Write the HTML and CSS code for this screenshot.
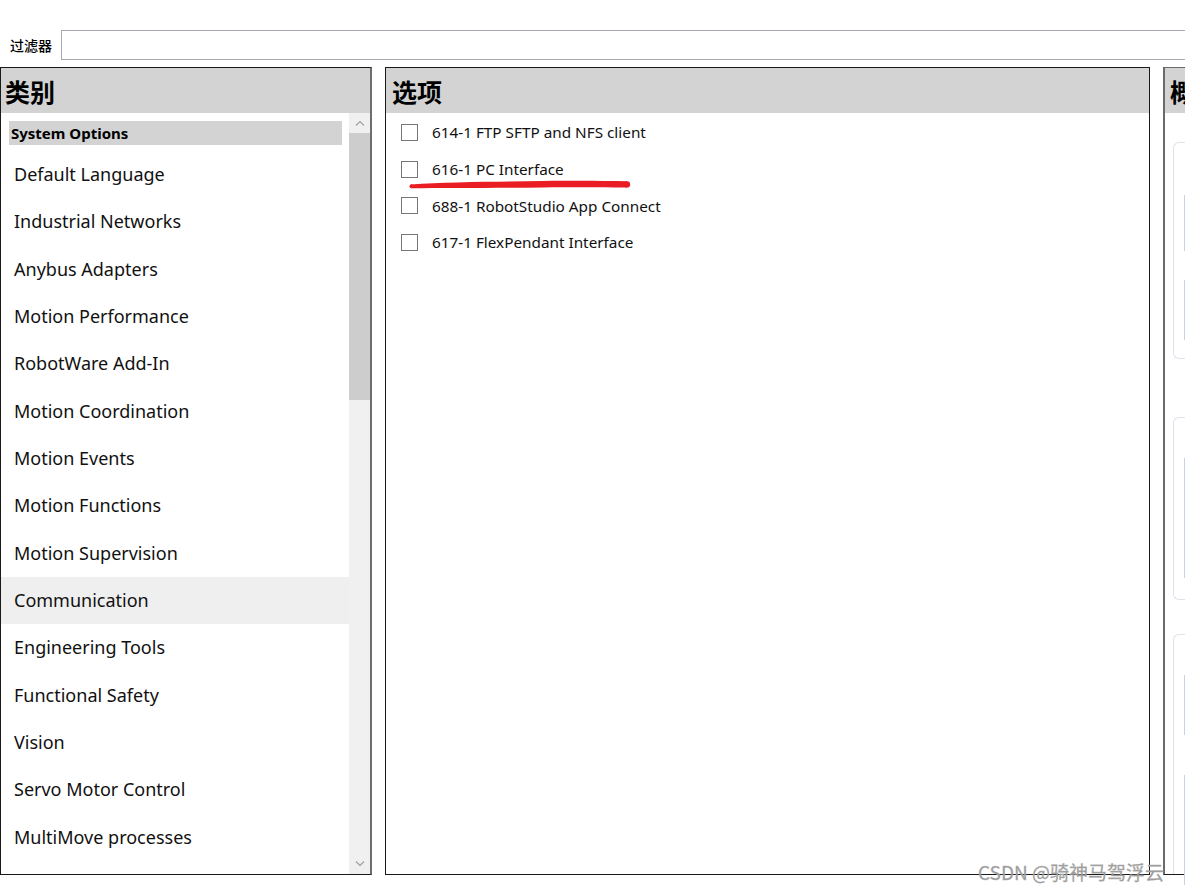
FILE: index.html
```html
<!DOCTYPE html>
<html lang="zh">
<head>
    <meta charset="UTF-8">
    <title>Options</title>
    <link rel="stylesheet" href="styles.css">
</head>
<body>

<div class="filter-row">
    <label for="filter">过滤器</label>
    <input type="text" id="filter" class="filter-input">
</div>

<div class="panels">
    <section class="panel panel-category">
        <h2 class="panel-head">类别</h2>
        <div class="panel-body">
            <ul class="category-list">
                <li class="group">System Options</li>
                <li>Default Language</li>
                <li>Industrial Networks</li>
                <li>Anybus Adapters</li>
                <li>Motion Performance</li>
                <li>RobotWare Add-In</li>
                <li>Motion Coordination</li>
                <li>Motion Events</li>
                <li>Motion Functions</li>
                <li>Motion Supervision</li>
                <li class="selected">Communication</li>
                <li>Engineering Tools</li>
                <li>Functional Safety</li>
                <li>Vision</li>
                <li>Servo Motor Control</li>
                <li>MultiMove processes</li>
            </ul>
            <div class="scrollbar">
                <div class="sb-btn">
                    <svg width="10" height="6" viewBox="0 0 10 6"><path d="M1 5.5 L5 1.5 L9 5.5" fill="none" stroke="#a0a0a0" stroke-width="1.2"/></svg>
                </div>
                <div class="sb-thumb"></div>
                <div class="sb-track"></div>
                <div class="sb-btn">
                    <svg width="10" height="6" viewBox="0 0 10 6"><path d="M1 0.5 L5 4.5 L9 0.5" fill="none" stroke="#a0a0a0" stroke-width="1.2"/></svg>
                </div>
            </div>
        </div>
    </section>

    <section class="panel panel-options">
        <h2 class="panel-head">选项</h2>
        <div class="panel-body">
            <ul class="option-list">
                <li><span class="check"></span>614-1 FTP SFTP and NFS client</li>
                <li><span class="check"></span>616-1 PC Interface</li>
                <li><span class="check"></span>688-1 RobotStudio App Connect</li>
                <li><span class="check"></span>617-1 FlexPendant Interface</li>
            </ul>
            <!-- red marker stroke under 616-1 -->
            <svg class="marker" width="224" height="14" viewBox="0 0 224 14">
                <path d="M3 6.5 C 40 3.6, 90 3.6, 135 3 C 170 2.6, 195 2.8, 219 3.3 L219 9.6 C 195 9.2, 170 9, 135 9.4 C 90 10, 40 10, 3 10.2 Z" fill="#ea1c24"/>
                <circle cx="3.5" cy="8.3" r="2" fill="#ea1c24"/>
                <circle cx="219" cy="6.45" r="3.15" fill="#ea1c24"/>
            </svg>
        </div>
    </section>

    <section class="panel panel-overview">
        <h2 class="panel-head">概</h2>
        <div class="panel-body">
            <div class="card card-a">
                <div class="card-line line-1"></div>
                <div class="card-line line-2"></div>
            </div>
            <div class="card card-b">
                <div class="card-line line-3"></div>
            </div>
            <div class="card card-c">
                <div class="card-line line-4"></div>
                <div class="card-line line-5"></div>
            </div>
        </div>
    </section>
</div>

<div class="watermark">CSDN @骑神马驾浮云</div>

</body>
</html>
```

FILE: styles.css
```css
body {
    margin: 0;
    width: 1185px;
    height: 891px;
    overflow: hidden;
    background: #fff;
    font-family: "Noto Sans", "Open Sans", "Noto Sans CJK SC", sans-serif;
    color: #000;
    position: relative;
}
.filter-row {
    display: flex;
    align-items: center;
    padding-top: 30px;
    margin-bottom: 7px;
}
.filter-row label {
    flex: 0 0 61px;
    padding-left: 10px;
    box-sizing: border-box;
    white-space: nowrap;
    font-family: "Noto Sans CJK SC", sans-serif;
    font-size: 14px;
    font-weight: 500;
}
.filter-input {
    flex: 0 0 1140px;
    height: 30px;
    box-sizing: border-box;
    border: 1px solid #a9a9b1;
    margin: 0;
    padding: 0;
    outline: none;
}
.panels {
    display: flex;
    gap: 13px;
    height: 808px;
}
.panel {
    display: flex;
    flex-direction: column;
    box-sizing: border-box;
    border: 1px solid #1a1a1a;
}
.panel-category {
    flex: 0 0 372px;
    border-right: 2px solid #6e6e6e;
}
.panel-options {
    flex: 0 0 765px;
}
.panel-overview {
    flex: 0 0 220px;
    border-left: 2px solid #6a6a6a;
    border-top-color: #6a6a6a;
}
.panel-head {
    margin: 0;
    height: 45px;
    flex: 0 0 45px;
    background: #d3d3d3;
    font-family: "Noto Sans CJK SC", sans-serif;
    font-size: 25px;
    font-weight: 700;
    line-height: 46px;
    padding-left: 4px;
    white-space: nowrap;
}
.panel-options .panel-head {
    padding-left: 6px;
}
.panel-overview .panel-head {
    padding-left: 5px;
}
.panel-body {
    flex: 1;
    display: flex;
    position: relative;
    min-height: 0;
}

/* category list */
.category-list {
    flex: 1;
    list-style: none;
    margin: 0;
    padding: 8px 0 0;
    overflow: hidden;
}
.category-list li {
    height: 47.33px;
    line-height: 47px;
    padding-left: 13px;
    font-size: 18px;
    color: #111;
}
.category-list li.group {
    height: 24px;
    line-height: 24px;
    margin: 0 7px 6px 8px;
    padding-left: 2px;
    background: #d3d3d3;
    font-size: 15px;
    font-weight: 700;
    color: #000;
}
.category-list li.selected {
    background: #efefef;
}
.scrollbar {
    flex: 0 0 21px;
    display: flex;
    flex-direction: column;
    background: #f0f0f0;
}
.sb-btn {
    flex: 0 0 20px;
    display: flex;
    align-items: center;
    justify-content: center;
}
.sb-thumb {
    flex: 0 0 267px;
    background: #cdcdcd;
}
.sb-track {
    flex: 1;
}

/* option list */
.option-list {
    list-style: none;
    margin: 0;
    padding: 1px 0 0 15px;
    flex: 1;
}
.option-list li {
    display: flex;
    align-items: center;
    height: 36.7px;
    font-size: 15.3px;
    color: #111;
}
.check {
    width: 17px;
    height: 17px;
    box-sizing: border-box;
    border: 1px solid #767676;
    background: #fff;
    margin-right: 14px;
}
.marker {
    position: absolute;
    left: 22px;
    top: 65px;
}

/* overview cards */
.panel-overview .panel-body {
    flex-direction: column;
    padding-left: 8px;
}
.card {
    border: 1px solid #dde2e8;
    border-right: none;
    border-radius: 6px 0 0 6px;
    position: relative;
}
.card-a {
    margin-top: 29px;
    height: 215px;
}
.card-b {
    margin-top: 58px;
    height: 181px;
}
.card-c {
    margin-top: 34px;
    flex: 1;
    border-bottom: none;
    border-radius: 6px 0 0 0;
}
.card-line {
    position: absolute;
    left: 10px;
    width: 10px;
    border-left: 1px solid #c5d3e2;
}
.line-1 { top: 52px; height: 56px; }
.line-2 { top: 137px; height: 60px; }
.line-3 { top: 40px; height: 120px; }
.line-4 { top: 40px; height: 60px; }
.line-5 { top: 140px; height: 110px; }

.watermark {
    position: absolute;
    left: 978px;
    top: 858px;
    font-family: "Noto Sans CJK SC", sans-serif;
    font-size: 19px;
    color: #9a9a9a;
    -webkit-text-stroke: 0.3px #b0b0b0;
}
```
